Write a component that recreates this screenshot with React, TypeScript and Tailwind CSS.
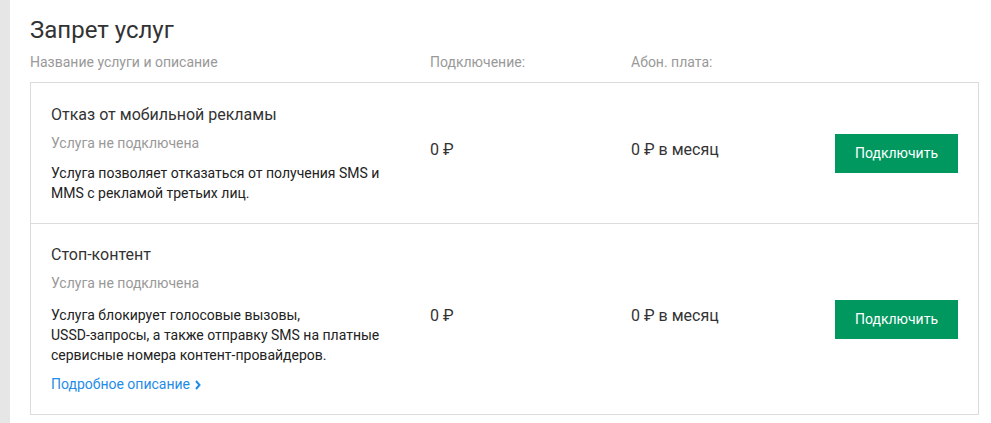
import React from 'react';

interface Service {
    id: string;
    title: string;
    status: string;
    description: string[];
    connectPrice: string;
    monthlyPrice: string;
    detailsLink?: boolean;
}

const services: Service[] = [
    {
        id: 'no-ads',
        title: 'Отказ от мобильной рекламы',
        status: 'Услуга не подключена',
        description: ['Услуга позволяет отказаться от получения SMS и', 'MMS с рекламой третьих лиц.'],
        connectPrice: '0 ₽',
        monthlyPrice: '0 ₽ в месяц',
    },
    {
        id: 'stop-content',
        title: 'Стоп-контент',
        status: 'Услуга не подключена',
        description: [
            'Услуга блокирует голосовые вызовы,',
            'USSD-запросы, а также отправку SMS на платные',
            'сервисные номера контент-провайдеров.',
        ],
        connectPrice: '0 ₽',
        monthlyPrice: '0 ₽ в месяц',
        detailsLink: true,
    },
];

const ServiceRow: React.FC<{ service: Service; first: boolean }> = ({ service, first }) => (
    <div className={`grid grid-cols-[399px_201px_1fr_auto] items-center pr-5 ${first ? '' : 'border-t border-[#dcdcdc]'}`}>
        <div className={`pl-5 pb-5 ${first ? 'pt-5' : 'pt-[19px]'}`}>
            <h3 className="text-[16px] leading-[24px] text-[#333]">{service.title}</h3>
            <p className="mt-[6px] text-[14px] leading-[20px] text-[#999]">{service.status}</p>
            <p className={`${first ? 'mt-[10px]' : 'mt-[12px]'} text-[14px] leading-[20px] text-[#222]`}>
                {service.description.map((line, i) => (
                    <span key={i} className="block">{line}</span>
                ))}
            </p>
            {service.detailsLink && (
                <a href="#" className="mt-[9px] flex items-center gap-[5px] text-[14px] leading-[20px] text-[#1f8ce6]">
                    Подробное описание
                    <svg width="6" height="10" viewBox="0 0 6 10" className="mt-[1px]">
                        <path d="M1 1l3.5 4L1 9" fill="none" stroke="#1f8ce6" strokeWidth="2" />
                    </svg>
                </a>
            )}
        </div>
        <div className="-mt-[6px] text-[16px] leading-[22px] text-[#333]">{service.connectPrice}</div>
        <div className="-mt-[6px] text-[16px] leading-[22px] text-[#333]">{service.monthlyPrice}</div>
        <button className="h-[39px] w-[123px] bg-[#00985f] text-[14px] text-white">Подключить</button>
    </div>
);

export default function App() {
    return (
        <div className="flex min-h-[423px] bg-white" style={{ fontFamily: 'Roboto, "Noto Sans", sans-serif' }}>
            <div className="w-[10px] shrink-0 bg-[#e6e6e6]" />
            <div className="flex-1 pl-5 pr-3">
                <h1 className="pt-[15px] text-[24px] leading-[30px] text-[#333]">Запрет услуг</h1>
                <div className="mt-[7px] grid grid-cols-[400px_201px_1fr] text-[14px] leading-[20px] text-[#999]">
                    <span>Название услуги и описание</span>
                    <span>Подключение:</span>
                    <span>Абон. плата:</span>
                </div>
                <div className="mt-[10px] w-[949px] border border-[#dcdcdc]">
                    {services.map((s, i) => (
                        <ServiceRow key={s.id} service={s} first={i === 0} />
                    ))}
                </div>
            </div>
        </div>
    );
}
